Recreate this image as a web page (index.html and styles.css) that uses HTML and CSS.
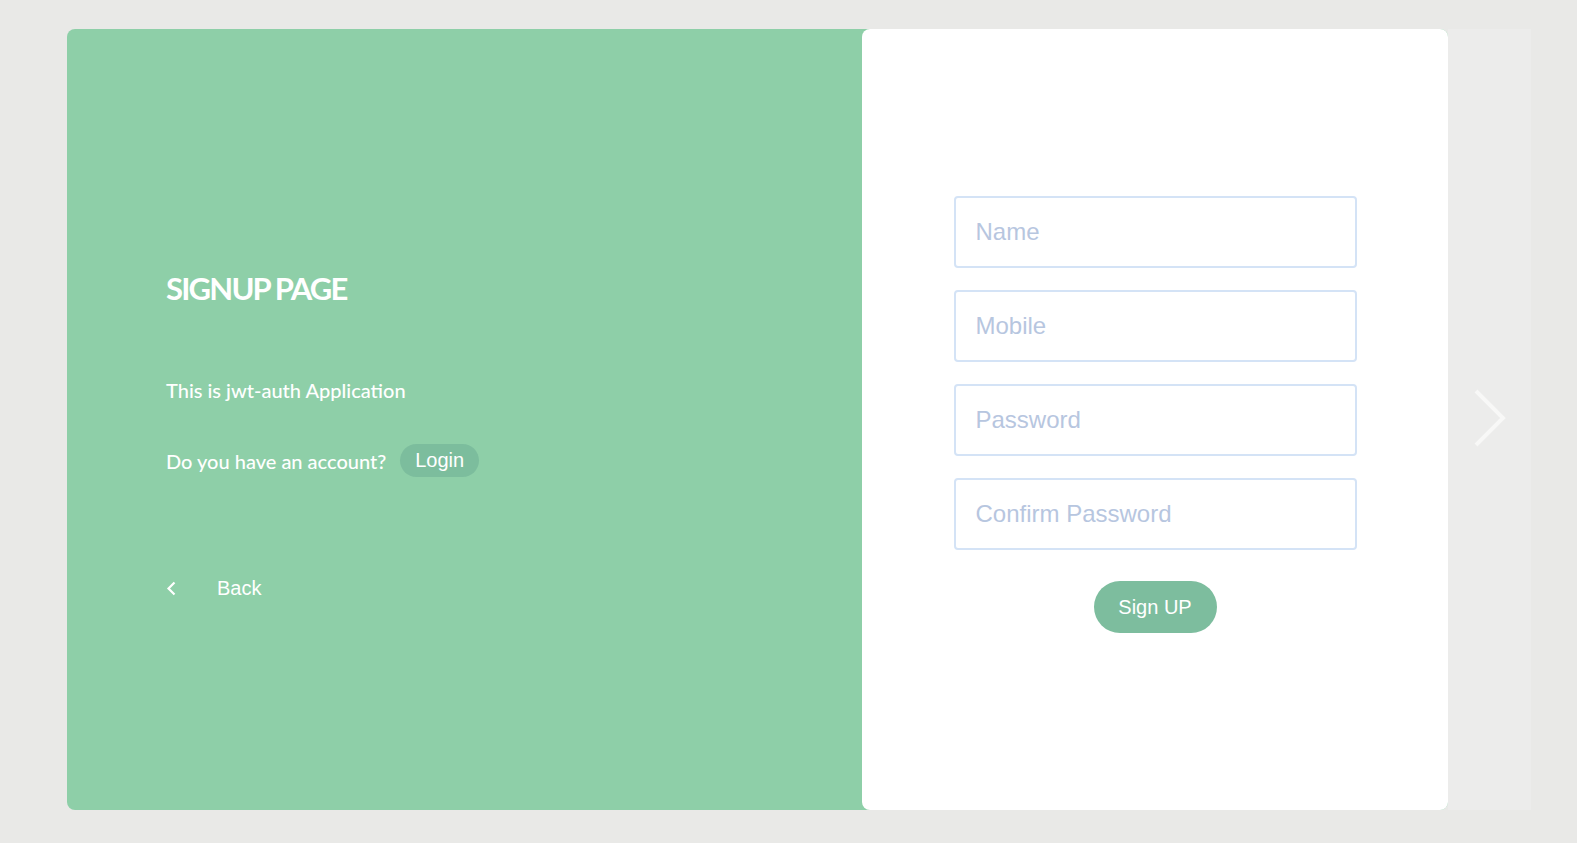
FILE: index.html
```html
<!DOCTYPE html>
<html lang="en">
<head>
<meta charset="utf-8">
<title>Signup</title>
<link rel="stylesheet" href="styles.css">
</head>
<body>
<div class="stage">
  <div class="card">
    <section class="intro">
      <h1 class="title">SIGNUP PAGE</h1>
      <p class="lead">This is jwt-auth Application</p>
      <div class="account-row">
        <span class="account-text">Do you have an account?</span>
        <button class="login-pill" type="button">Login</button>
      </div>
      <a class="back-link" href="#">
        <svg class="back-icon" width="11" height="15" viewBox="0 0 11 15"><polyline points="8.5,1.5 2.5,7.5 8.5,13.5" fill="none" stroke="#fff" stroke-width="2.2"/></svg>
        <span>Back</span>
      </a>
    </section>
    <section class="form-panel">
      <form class="signup-form">
        <input class="field" type="text" placeholder="Name">
        <input class="field" type="text" placeholder="Mobile">
        <input class="field" type="password" placeholder="Password">
        <input class="field" type="password" placeholder="Confirm Password">
        <button class="signup-btn" type="button">Sign UP</button>
      </form>
    </section>
  </div>
  <div class="next-strip">
    <svg class="next-icon" width="34" height="60" viewBox="0 0 34 60"><polyline points="3,3 30,30 3,57" fill="none" stroke="#f8f8f7" stroke-width="4"/></svg>
  </div>
</div>
</body>
</html>
```

FILE: styles.css
```css
html, body {
  margin: 0;
  padding: 0;
  background: #e9e9e7;
}

body {
  width: 1577px;
  height: 843px;
  overflow: hidden;
}

.stage {
  display: flex;
  margin: 29px 0 0 67px;
  height: 781px;
}

.card {
  display: flex;
  width: 1381px;
  height: 100%;
  background: #8ecfa8;
  border-radius: 8px;
}

.intro {
  flex: 1;
  padding: 241px 0 0 99px;
  color: #fff;
  font-family: "Lato", "Open Sans", sans-serif;
}

.title {
  margin: 0;
  font-size: 31px;
  line-height: 36px;
  font-weight: 700;
  letter-spacing: -1.8px;
}

.lead {
  margin: 72px 0 0;
  font-size: 20px;
  line-height: 24px;
  font-weight: 500;
}

.account-row {
  display: flex;
  align-items: center;
  gap: 14px;
  margin-top: 42px;
  font-size: 20px;
  font-weight: 500;
}

.login-pill {
  height: 33px;
  padding: 0 15px;
  border: none;
  border-radius: 17px;
  background: #7cbd9d;
  color: #fff;
  font-family: "Liberation Sans", Arial, sans-serif;
  font-size: 20px;
  line-height: 23px;
}

.back-link {
  display: flex;
  align-items: center;
  gap: 40px;
  margin-top: 100px;
  color: #fff;
  text-decoration: none;
  font-family: "Liberation Sans", Arial, sans-serif;
  font-size: 20px;
  line-height: 23px;
}

.back-icon {
  display: block;
}

.form-panel {
  width: 586px;
  height: 100%;
  background: #fff;
  border-radius: 8px;
}

.signup-form {
  display: flex;
  flex-direction: column;
  align-items: center;
  gap: 22px;
  padding-top: 167px;
}

.field {
  box-sizing: border-box;
  width: 403px;
  height: 72px;
  padding: 0 20px;
  border: 2px solid #d4e3f6;
  border-radius: 4px;
  background: #fff;
  font-family: "Liberation Sans", Arial, sans-serif;
  font-size: 24px;
  color: #4a5568;
  outline: none;
}

.field::placeholder {
  color: #b7c6df;
}

.signup-btn {
  margin-top: 9px;
  width: 123px;
  height: 52px;
  border: none;
  border-radius: 26px;
  background: #7dbd9e;
  color: #fff;
  font-family: "Liberation Sans", Arial, sans-serif;
  font-size: 20px;
}

.next-strip {
  width: 83px;
  height: 100%;
  background: #ececeb;
  display: flex;
  align-items: center;
  justify-content: center;
}

.next-icon {
  display: block;
  margin-bottom: 4px;
}
```
